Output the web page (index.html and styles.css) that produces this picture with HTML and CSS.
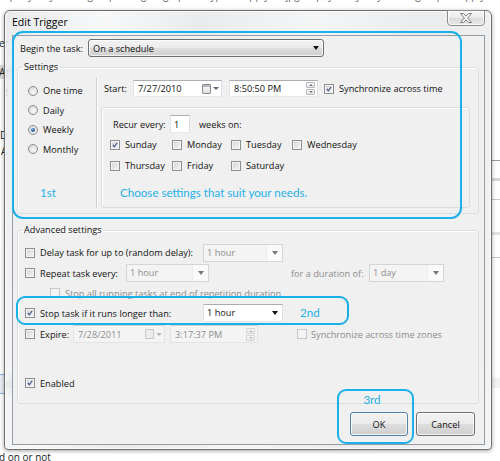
FILE: index.html
```html
<!DOCTYPE html>
<html>
<head>
<meta charset="utf-8">
<title>Edit Trigger</title>
<link rel="stylesheet" href="styles.css">
</head>
<body>
<div class="desktop">
  <div class="behind">
    <div class="bg-topline">query your group tag graph type apply jpg pay by your group apply jog yup gap happy query your group</div>
    <div class="frag frag-er">er</div>
    <div class="frag frag-ar">Ar</div>
    <div class="frag frag-t">t</div>
    <div class="frag frag-d">D</div>
    <div class="frag frag-a">A</div>
    <div class="frag frag-btn">d</div>
    <div class="frag frag-bottom">d on or not</div>
    <div class="rline rl1"></div>
    <div class="rline rl2"></div>
    <div class="rline rl3"></div>
    <div class="rline rl4"></div>
    <div class="rline rl5"></div>
    <div class="rline rl6"></div>
  </div>

  <div class="dialog">
    <div class="titlebar">
      <span class="title">Edit Trigger</span>
      <span class="close"><svg width="14" height="10" viewBox="0 0 14 10"><path d="M1.5 0.5 H4.5 L7 3.2 L9.5 0.5 H12.5 L8.6 5 L12.5 9.5 H9.5 L7 6.8 L4.5 9.5 H1.5 L5.4 5 Z" fill="#fbfbfb" stroke="#6f6f6f" stroke-width="0.9" stroke-linejoin="round"/></svg></span>
    </div>
    <div class="client">
      <div class="begin-row">
        <span class="begin-label">Begin the task:</span>
        <div class="combo combo-begin"><span>On a schedule</span><i class="tri"></i></div>
      </div>

      <fieldset class="group group-settings">
        <legend>Settings</legend>
        <div class="settings-body">
          <div class="freq">
            <div class="radio-row"><span class="radio"></span>One time</div>
            <div class="radio-row"><span class="radio"></span>Daily</div>
            <div class="radio-row"><span class="radio on"></span>Weekly</div>
            <div class="radio-row"><span class="radio"></span>Monthly</div>
            <div class="note note-1st">1st</div>
          </div>
          <div class="vsep"></div>
          <div class="sched">
            <div class="start-row">
              <span class="start-label">Start:</span>
              <div class="field date"><span class="val">7/27/2010</span><span class="cal"></span><i class="tri tri-s"></i></div>
              <div class="field time"><span class="val">8:50:50 PM</span><span class="spin"><b><i class="up"></i></b><b><i class="dn"></i></b></span></div>
              <div class="chk"><span class="cb on"><svg viewBox="0 0 10 10"><path d="M2.3 4.8 L4.2 7.2 L7.8 2.2" fill="none" stroke="#44568f" stroke-width="1.5"/></svg></span>Synchronize across time</div>
            </div>
            <div class="weekly">
              <div class="recur-row">
                <span class="recur-label">Recur every:</span>
                <div class="field num"><span class="val">1</span></div>
                <span class="weeks">weeks on:</span>
              </div>
              <div class="days">
                <div class="chk"><span class="cb on"><svg viewBox="0 0 10 10"><path d="M2.3 4.8 L4.2 7.2 L7.8 2.2" fill="none" stroke="#44568f" stroke-width="1.5"/></svg></span>Sunday</div>
                <div class="chk"><span class="cb"></span>Monday</div>
                <div class="chk"><span class="cb"></span>Tuesday</div>
                <div class="chk"><span class="cb"></span>Wednesday</div>
                <div class="chk"><span class="cb"></span>Thursday</div>
                <div class="chk"><span class="cb"></span>Friday</div>
                <div class="chk"><span class="cb"></span>Saturday</div>
              </div>
              <div class="note note-choose">Choose settings that suit your needs.</div>
            </div>
          </div>
        </div>
      </fieldset>

      <fieldset class="group group-adv">
        <legend>Advanced settings</legend>
        <div class="adv-body">
          <div class="row r-delay">
            <div class="chk w178"><span class="cb"></span>Delay task for up to (random delay):</div>
            <div class="dd dis w80"><span class="val">1 hour</span><span class="ddbtn"><i class="tri"></i></span></div>
          </div>
          <div class="row r-repeat">
            <div class="chk w101"><span class="cb"></span>Repeat task every:</div>
            <div class="dd dis w83"><span class="val">1 hour</span><span class="ddbtn"><i class="tri"></i></span></div>
            <span class="dur">for a duration of:</span>
            <div class="dd dis w75"><span class="val">1 day</span><span class="ddbtn"><i class="tri"></i></span></div>
          </div>
          <div class="row r-stopall">
            <div class="chk dis-text"><span class="cb dis"></span>Stop all running tasks at end of repetition duration</div>
          </div>
          <div class="row r-stop">
            <div class="chk w178"><span class="cb on"><svg viewBox="0 0 10 10"><path d="M2.3 4.8 L4.2 7.2 L7.8 2.2" fill="none" stroke="#44568f" stroke-width="1.5"/></svg></span>Stop task if it runs longer than:</div>
            <div class="dd w80"><span class="val">1 hour</span><span class="ddbtn"><i class="tri"></i></span></div>
            <span class="note note-2nd">2nd</span>
          </div>
          <div class="row r-expire">
            <div class="chk w48"><span class="cb"></span>Expire:</div>
            <div class="field date dis w92"><span class="val">7/28/2011</span><span class="cal"></span><i class="tri tri-s"></i></div>
            <div class="field time dis w88"><span class="val">3:17:37 PM</span><span class="spin"><b><i class="up"></i></b><b><i class="dn"></i></b></span></div>
            <div class="chk dis-text sync-tz"><span class="cb dis"></span>Synchronize across time zones</div>
          </div>
          <div class="row r-enabled">
            <div class="chk"><span class="cb on"><svg viewBox="0 0 10 10"><path d="M2.3 4.8 L4.2 7.2 L7.8 2.2" fill="none" stroke="#44568f" stroke-width="1.5"/></svg></span>Enabled</div>
          </div>
        </div>
      </fieldset>

      <div class="buttons">
        <span class="btn btn-ok">OK</span>
        <span class="btn">Cancel</span>
      </div>
    </div>
  </div>

  <div class="mark mark-1"></div>
  <div class="mark mark-2"></div>
  <div class="mark mark-3"><span class="note note-3rd">3rd</span></div>
</div>
</body>
</html>
```

FILE: styles.css
```css
html, body {
  margin: 0;
  padding: 0;
}
body {
  width: 500px;
  height: 461px;
  overflow: hidden;
  background: #ffffff;
  font-family: "Open Sans", "Noto Sans", sans-serif;
  font-size: 9.2px;
  color: #111;
}
.desktop {
  position: relative;
  width: 500px;
  height: 461px;
  overflow: hidden;
}

/* ---------- window behind the dialog ---------- */
.behind {
  position: absolute;
  inset: 0;
}
.bg-topline {
  position: absolute;
  left: 6px;
  top: -11px;
  width: 520px;
  white-space: nowrap;
  font-size: 10px;
  line-height: 12px;
  color: #666;
  word-spacing: 14px;
}
.frag {
  position: absolute;
  left: 0;
  font-size: 10px;
  line-height: 14px;
  color: #222;
}
.frag-er { top: 36px; left: -1px; }
.frag-ar { top: 65px; left: -1px; width: 14px; background: #dcdcdc; }
.frag-t { top: 85px; left: 5px; }
.frag-d { top: 128px; left: 0; }
.frag-a { top: 144px; left: 1px; }
.frag-btn { top: 374px; left: -4px; width: 14px; height: 18px; line-height: 18px; border: 1px solid #7eb4ea; text-align: right; background: #e8eef4; }
.frag-bottom { top: 450px; left: -1px; }
.rline {
  position: absolute;
  left: 490px;
  width: 10px;
  height: 1px;
  background: #c8c8c8;
}
.rl1 { top: 160px; background: #9a9a9a; }
.rl2 { top: 178px; height: 3px; background: #d6d6d6; }
.rl3 { top: 199px; }
.rl4 { top: 232px; height: 3px; background: #e2e2e2; }
.rl5 { top: 257px; }
.rl6 { top: 378px; height: 10px; background: #f2f2f2; }

/* ---------- dialog frame ---------- */
.dialog {
  position: absolute;
  left: 4px;
  top: 10px;
  width: 488px;
  height: 440px;
  box-sizing: border-box;
  border: 1px solid #6e6e6e;
  border-radius: 6px 6px 4px 4px;
  background:
    linear-gradient(100deg, rgba(230,232,235,0.88) 0%, rgba(246,247,248,0.9) 18%, rgba(230,232,234,0.88) 35%, rgba(243,244,245,0.9) 55%, rgba(231,233,235,0.88) 75%, rgba(241,242,243,0.9) 100%);
  box-shadow: 0 1px 4px rgba(0,0,0,0.35), inset 0 0 0 1px rgba(255,255,255,0.7);
  padding: 0 6px 4px 7px;
  display: flex;
  flex-direction: column;
}
.titlebar {
  flex: none;
  height: 24px;
  display: flex;
  justify-content: space-between;
  align-items: flex-start;
}
.title {
  line-height: 23px;
  font-size: 10.5px;
  color: #000;
}
.close {
  width: 38px;
  height: 16px;
  margin-top: -1px;
  box-sizing: border-box;
  border: 1px solid #8a8a8a;
  border-radius: 0 0 4px 4px;
  background: linear-gradient(#f7f7f7, #e9e9e9 50%, #dcdcdc 51%, #e6e6e6);
  box-shadow: inset 0 0 0 1px rgba(255,255,255,0.8);
  display: flex;
  align-items: center;
  justify-content: center;
}
.close svg { display: block; }

.client {
  flex: 1;
  box-sizing: border-box;
  border: 1px solid #979ca2;
  background: #f0f0f0;
  display: flex;
  flex-direction: column;
}

/* ---------- generic controls ---------- */
.tri {
  display: block;
  width: 0;
  height: 0;
  border-left: 3.5px solid transparent;
  border-right: 3.5px solid transparent;
  border-top: 4px solid #111;
}
.tri-s {
  border-left-width: 3px;
  border-right-width: 3px;
  border-top: 3px solid #5a6a88;
}
.combo {
  box-sizing: border-box;
  border: 1px solid #707070;
  border-radius: 3px;
  background: linear-gradient(#f2f2f2 0%, #ebebeb 48%, #dddddd 52%, #cfcfcf 100%);
  box-shadow: inset 0 0 0 1px rgba(255,255,255,0.75);
  display: flex;
  align-items: center;
  justify-content: space-between;
  padding: 0 4px 0 4px;
}
.field {
  box-sizing: border-box;
  height: 17px;
  border: 1px solid #abadb3;
  border-color: #abadb3 #dbdfe6 #e3e9ef #e2e3ea;
  background: #fff;
  display: flex;
  align-items: center;
  padding: 0 2px 0 4px;
}
.field .val { flex: 1; white-space: nowrap; }
.field.dis { background: #f4f4f4; color: #8d8d8d; border-color: #cfcfcf #e4e4e4 #e4e4e4 #e4e4e4; }
.cal {
  width: 7px;
  height: 8px;
  border: 1px solid #8c8c8c;
  border-radius: 1px;
  background: linear-gradient(#b9bcc2 0 2px, #f4f4f4 2px, #dedede);
  margin-right: 2px;
}
.dis .cal { border-color: #c6c6c6; background: #ececec; }
.dis .tri-s { border-top-color: #b8b8b8; }
.spin {
  display: flex;
  flex-direction: column;
  gap: 1px;
  width: 9px;
}
.spin b {
  box-sizing: border-box;
  height: 6px;
  border: 1px solid #b7b7b7;
  border-radius: 1px;
  background: linear-gradient(#fafafa, #e6e6e6);
  display: flex;
  align-items: center;
  justify-content: center;
}
.spin .up, .spin .dn {
  display: block;
  width: 0; height: 0;
  border-left: 2px solid transparent;
  border-right: 2px solid transparent;
}
.spin .up { border-bottom: 2px solid #6b7a92; }
.spin .dn { border-top: 2px solid #6b7a92; }
.dis .spin b { border-color: #d4d4d4; }
.dis .spin .up { border-bottom-color: #bbb; }
.dis .spin .dn { border-top-color: #bbb; }

.dd {
  box-sizing: border-box;
  height: 18px;
  border: 1px solid #abadb3;
  border-color: #abadb3 #dbdfe6 #e3e9ef #e2e3ea;
  background: #fff;
  display: flex;
  align-items: stretch;
}
.dd .val {
  flex: 1;
  padding-left: 3px;
  line-height: 16px;
  white-space: nowrap;
}
.ddbtn {
  width: 15px;
  display: flex;
  align-items: center;
  justify-content: center;
}
.dd.dis { background: #f7f7f7; color: #8d8d8d; border-color: #d5d5d5; }
.dd.dis .val { background: #f4f4f4; }
.dd.dis .ddbtn { background: #fafafa; border-left: 1px solid #ececec; }
.dd.dis .tri { border-top-color: #777; }

.chk {
  display: flex;
  align-items: center;
  gap: 5px;
  white-space: nowrap;
}
.cb {
  flex: none;
  box-sizing: border-box;
  width: 10px;
  height: 10px;
  border: 1px solid #8e8f8f;
  background: linear-gradient(135deg, #d3d3d3, #f6f6f6);
  box-shadow: inset 0 0 0 1px #f4f4f4;
  display: flex;
}
.cb svg { width: 100%; height: 100%; display: block; }
.cb.dis { border-color: #c7c7c7; background: #f4f4f4; box-shadow: none; }
.dis-text { color: #8d8d8d; }

.radio {
  flex: none;
  box-sizing: border-box;
  width: 10px;
  height: 10px;
  border-radius: 50%;
  border: 1px solid #8c8c8c;
  background: radial-gradient(circle at 60% 65%, #f8f8f8, #d3d3d3);
  display: flex;
  align-items: center;
  justify-content: center;
}
.radio.on::after {
  content: "";
  width: 4px;
  height: 4px;
  border-radius: 50%;
  background: radial-gradient(circle at 40% 35%, #6fb3e8, #1b3f73 75%);
}

.note {
  font-family: "Lato", "Open Sans", sans-serif;
  color: #25b0e8;
  font-size: 11.6px;
  line-height: 14px;
}

/* ---------- begin row ---------- */
.begin-row {
  flex: none;
  display: flex;
  align-items: center;
  height: 18px;
  padding: 3px 0 0 7px;
}
.begin-label { width: 68px; }
.combo-begin { width: 236px; height: 18px; }

/* ---------- group boxes ---------- */
.group {
  box-sizing: border-box;
  width: 462px;
  min-width: 0;
  margin: 0 0 0 4px;
  padding: 0;
  border: 1px solid #d5dfe5;
  border-radius: 3px;
  box-shadow: inset 1px 1px 0 #fff;
}
.group legend {
  margin-left: 4px;
  padding: 0 2px;
  line-height: 14px;
  color: #111;
}
.group-settings { margin-top: 3px; }
.group-adv { margin-top: 9px; }

.settings-body {
  display: flex;
  height: 139px;
}
.freq {
  flex: none;
  width: 78px;
  box-sizing: border-box;
  padding: 7px 0 0 10px;
}
.radio-row {
  display: flex;
  align-items: center;
  gap: 5px;
  height: 19.5px;
}
.note-1st { margin: 27px 0 0 12px; }
.vsep {
  flex: none;
  width: 1px;
  margin: 4px 0 4px;
  background: #d0d0d0;
  box-shadow: 1px 0 0 #fff;
}
.sched {
  flex: 1;
  padding: 6px 0 0 4px;
}
.start-row {
  display: flex;
  align-items: center;
  height: 17px;
  padding-left: 3px;
}
.start-label { width: 29px; }
.start-row .date { width: 89px; margin-right: 7px; }
.start-row .time { width: 89px; margin-right: 6px; }
.weekly {
  box-sizing: border-box;
  height: 101px;
  margin: 10px 8px 0 0;
  border: 1px solid #dcdcdc;
  border-radius: 3px;
  box-shadow: inset 1px 1px 0 #fff;
  padding: 7px 0 0 8px;
}
.recur-row {
  display: flex;
  align-items: center;
  height: 18px;
  margin-left: 3px;
}
.recur-label { width: 57px; }
.field.num { width: 20px; height: 18px; padding-left: 3px; }
.weeks { margin-left: 9px; }
.days {
  display: grid;
  grid-template-columns: 62px 59px 61px auto;
  grid-auto-rows: 21px;
  margin-top: 1px;
}
.note-choose { margin: 10px 0 0 10px; }

/* ---------- advanced ---------- */
.adv-body {
  box-sizing: border-box;
  height: 166px;
  padding: 5px 0 0 7px;
}
.row {
  display: flex;
  align-items: center;
}
.r-delay { height: 21px; }
.r-repeat { height: 20px; }
.r-stopall { height: 20px; padding-left: 25px; }
.r-stop { height: 20px; }
.r-expire { height: 22px; }
.r-enabled { height: 20px; margin-top: 28px; }
.w178 { width: 178px; }
.w101 { width: 101px; }
.w48 { width: 48px; }
.dd.w80 { width: 80px; }
.dd.w83 { width: 83px; }
.dd.w75 { width: 75px; }
.field.w92 { width: 92px; height: 18px; margin-right: 5px; }
.field.w88 { width: 88px; height: 18px; }
.dur { margin-left: 82px; width: 78px; color: #8d8d8d; }
.note-2nd { margin-left: 17px; }
.sync-tz { margin-left: 39px; gap: 4px; }

/* ---------- buttons ---------- */
.buttons {
  display: flex;
  justify-content: flex-end;
  gap: 8px;
  padding: 8px 9px 0 0;
}
.btn {
  box-sizing: border-box;
  width: 59px;
  height: 24px;
  border: 1px solid #707070;
  border-radius: 3px;
  background: linear-gradient(#f2f2f2 0%, #ebebeb 48%, #dddddd 52%, #cfcfcf 100%);
  box-shadow: inset 0 0 0 1px rgba(255,255,255,0.8);
  display: flex;
  align-items: center;
  justify-content: center;
  color: #111;
}
.btn-ok { width: 58px; border-color: #4f80a8; }

/* ---------- annotation marks ---------- */
.mark {
  position: absolute;
  box-sizing: border-box;
  border: 2px solid #1cb0ea;
}
.mark-1 { left: 12px; top: 31px; width: 450px; height: 188px; border-radius: 11px; }
.mark-2 { left: 16px; top: 296px; width: 333px; height: 29px; border-radius: 9px; }
.mark-3 { left: 337px; top: 389px; width: 77px; height: 55px; border-radius: 9px; text-align: center; }
.note-3rd { display: block; padding: 2px 7px 0 0; }
```
